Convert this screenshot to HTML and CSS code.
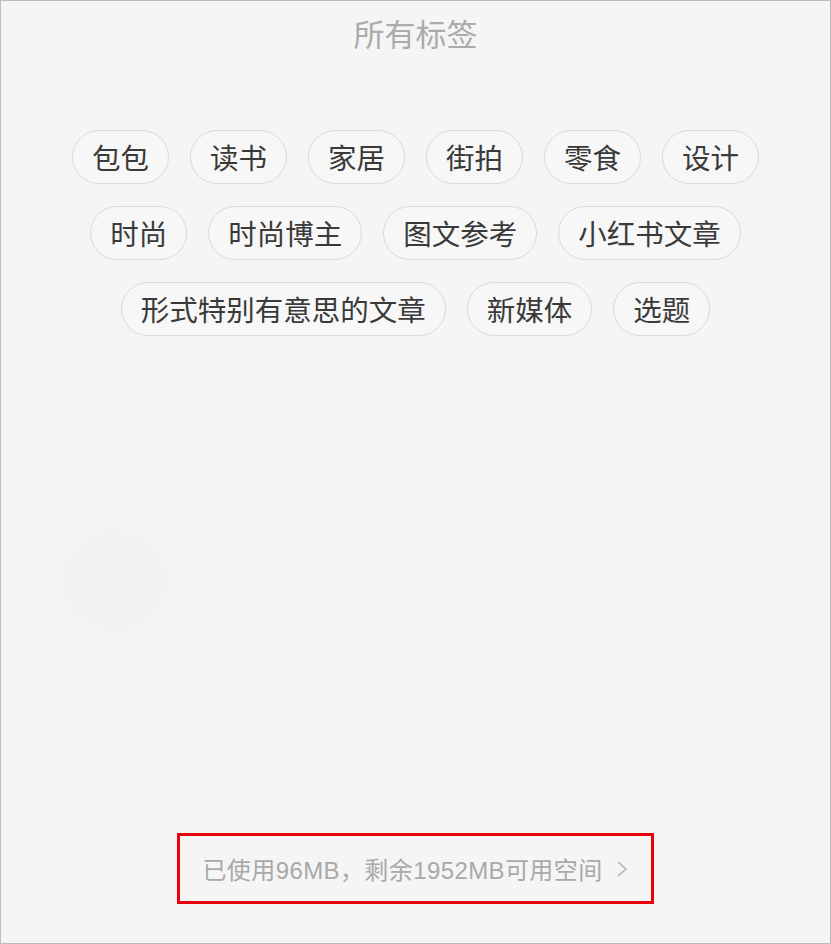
FILE: index.html
```html
<!DOCTYPE html>
<html lang="zh-CN">
<head>
    <meta charset="UTF-8">
    <meta name="viewport" content="width=device-width, initial-scale=1.0">
    <title>所有标签</title>
    <link rel="stylesheet" href="styles.css">
</head>
<body>
    <div class="screen">
        <div class="title">所有标签</div>

        <div class="tag-list">
            <span class="tag">包包</span>
            <span class="tag">读书</span>
            <span class="tag">家居</span>
            <span class="tag">街拍</span>
            <span class="tag">零食</span>
            <span class="tag">设计</span>
            <span class="tag">时尚</span>
            <span class="tag">时尚博主</span>
            <span class="tag">图文参考</span>
            <span class="tag">小红书文章</span>
            <span class="tag">形式特别有意思的文章</span>
            <span class="tag">新媒体</span>
            <span class="tag">选题</span>
        </div>

        <div class="storage">
            <a class="storage-link" href="#">
                <span>已使用96MB，剩余1952MB可用空间</span>
                <svg class="chevron" width="12" height="20" viewBox="0 0 12 20">
                    <path d="M2 3 L10 10 L2 17" fill="none" stroke="#b3b3b3" stroke-width="1.6"/>
                </svg>
            </a>
        </div>
    </div>
</body>
</html>
```

FILE: styles.css
```css
html, body {
    margin: 0;
    padding: 0;
}
body {
    font-family: "Noto Sans CJK SC", "Noto Sans", sans-serif;
    background-color: #f5f5f5;
    color: #333;
}
.screen {
    position: relative;
    box-sizing: border-box;
    height: 944px;
    border: 1px solid #bdbdbd;
    background-color: #f5f5f5;
    display: flex;
    flex-direction: column;
    align-items: center;
    overflow: hidden;
}
/* faint shape left from the blurred background */
.screen::before {
    content: "";
    position: absolute;
    left: 62px;
    top: 530px;
    width: 104px;
    height: 98px;
    border-radius: 50%;
    background-color: #f1f1f1;
    filter: blur(3px);
}
.title {
    position: relative;
    margin-top: 11px;
    font-size: 31px;
    line-height: 42px;
    color: #ababab;
}
.tag-list {
    position: relative;
    box-sizing: border-box;
    width: 100%;
    padding: 0 60px;
    margin-top: 76px;
    display: flex;
    flex-wrap: wrap;
    justify-content: center;
    gap: 22px 21px;
}
.tag {
    box-sizing: border-box;
    height: 54px;
    padding: 0 19px;
    border: 1px solid #dadada;
    border-radius: 27px;
    background-color: #f7f7f7;
    font-size: 28.5px;
    line-height: 52px;
    color: #3a3a3a;
    white-space: nowrap;
}
.storage {
    position: relative;
    margin-top: auto;
    margin-bottom: 39px;
    border: 3px solid #e8000b;
}
.storage-link {
    display: flex;
    align-items: center;
    gap: 13px;
    height: 65px;
    padding: 0 23px 0 22px;
    font-family: "Liberation Sans", "Noto Sans CJK SC", sans-serif;
    font-size: 24px;
    letter-spacing: 0.4px;
    color: #a9a9a9;
    text-decoration: none;
}
.chevron {
    display: block;
}
```
